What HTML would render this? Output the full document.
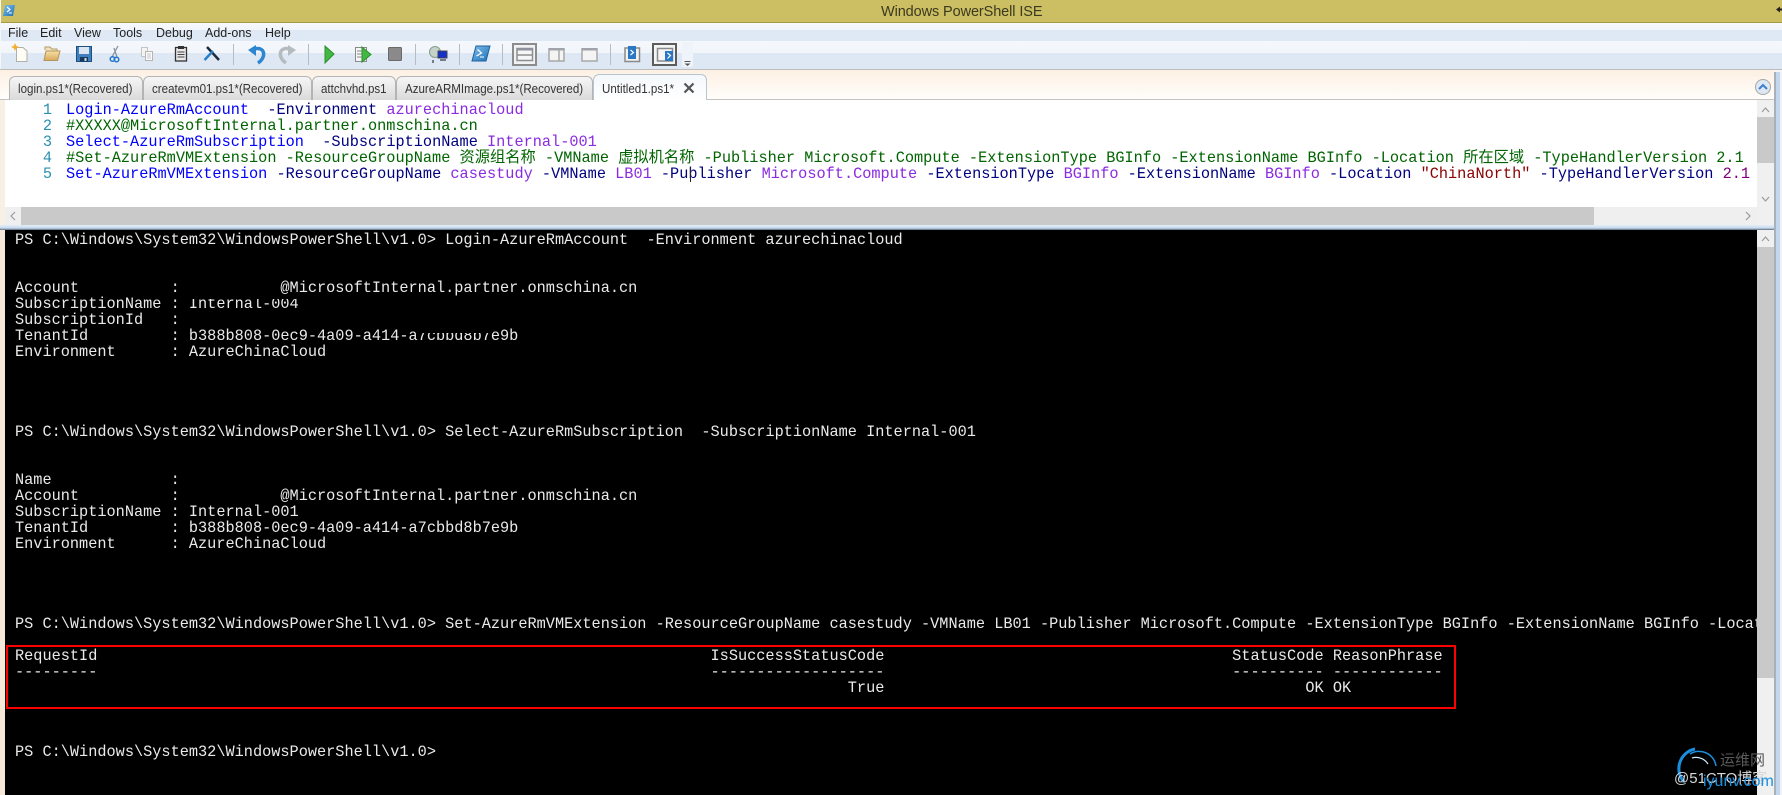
<!DOCTYPE html>
<html lang="en"><head><meta charset="utf-8"><title>Windows PowerShell ISE</title>
<style>
html,body{margin:0;padding:0;background:#f6f6f6}
body{position:relative;width:1782px;height:795px;overflow:hidden;font-family:"Liberation Sans","Noto Sans CJK SC",sans-serif}
.a{position:absolute}
.m{font:12.5px/16px "Liberation Sans",sans-serif;color:#222;top:25px;position:absolute}
.tab{position:absolute;box-sizing:border-box;top:76px;height:24px;border:1px solid #b4b4b4;border-bottom:0;border-radius:6px 6px 0 0;background:linear-gradient(#f6f6f6,#dadada);font:13px/24px "Liberation Sans",sans-serif;color:#333;white-space:nowrap;padding-left:8px;overflow:hidden}
.tab span{display:inline-block;transform:scaleX(.89);transform-origin:0 50%}
.tab.on{top:74px;height:27px;background:linear-gradient(#f4f8fc,#fff);border-color:#b8c4d0;line-height:28px}
.code{font-family:"Liberation Mono","Noto Sans CJK SC",monospace;font-size:15.25px;line-height:16px;white-space:pre}
.b{color:#0000ff}.n{color:#000080}.v{color:#8a2be2}.g{color:#006400}.r{color:#8b0000}.p{color:#800080}
</style></head><body>
<!-- title bar -->
<div class="a" style="left:1px;top:0;width:1781px;height:22px;background:#ccbe62"></div>
<div class="a" style="left:1px;top:22px;width:1781px;height:1px;background:#a89a40"></div>
<div class="a" style="left:881px;top:3px;font:14.5px/18px 'Liberation Sans',sans-serif;color:#3a3a20;letter-spacing:-.1px;white-space:nowrap">Windows PowerShell ISE</div>
<!-- menu + toolbar -->
<div class="a" style="left:1px;top:23px;width:1781px;height:46px;background:linear-gradient(#f6f9fd 0,#f2f6fb 7px,#dfe9f5 7px,#dfe9f5 18px,#f4f8fc 18px,#f2f6fb 30px,#dde8f4 30px,#dde8f4 46px)"></div>
<div class="a" style="left:0;top:69px;width:1782px;height:1px;background:#bcbcbc"></div>
<span class="m" style="left:8px">File</span><span class="m" style="left:40px">Edit</span><span class="m" style="left:74px">View</span><span class="m" style="left:113px">Tools</span><span class="m" style="left:156px">Debug</span><span class="m" style="left:205px">Add-ons</span><span class="m" style="left:265px">Help</span>
<!-- tab strip -->
<div class="a" style="left:0;top:70px;width:1774px;height:29px;background:linear-gradient(#fdf0e3,#fffdfa)"></div>
<div class="a" style="left:0;top:99px;width:1774px;height:1px;background:#c4c4c4"></div>
<div class="tab" style="left:9px;width:134px"><span>login.ps1*(Recovered)</span></div>
<div class="tab" style="left:143px;width:169px"><span>createvm01.ps1*(Recovered)</span></div>
<div class="tab" style="left:312px;width:84px"><span>attchvhd.ps1</span></div>
<div class="tab" style="left:396px;width:197px"><span>AzureARMImage.ps1*(Recovered)</span></div>
<div class="tab on" style="left:593px;width:114px"><span>Untitled1.ps1*</span></div>
<!-- editor -->
<div class="a" style="left:0;top:100px;width:5px;height:130px;background:#f8efe5"></div>
<div class="a" style="left:5px;top:100px;width:1752px;height:107px;background:#fff"></div>
<div class="a code" style="left:34px;top:102px;width:18px;text-align:right;color:#2b91af">1
2
3
4
5</div>
<div class="a code" style="left:66px;top:102px;width:1691px;overflow:hidden"><span class="b">Login-AzureRmAccount</span>  <span class="n">-Environment</span> <span class="v">azurechinacloud</span>
<span class="g">#XXXXX@MicrosoftInternal.partner.onmschina.cn</span>
<span class="b">Select-AzureRmSubscription</span>  <span class="n">-SubscriptionName</span> <span class="v">Internal-001</span>
<span class="g">#Set-AzureRmVMExtension -ResourceGroupName 资源组名称 -VMName 虚拟机名称 -Publisher Microsoft.Compute -ExtensionType BGInfo -ExtensionName BGInfo -Location 所在区域 -TypeHandlerVersion 2.1</span>
<span class="b">Set-AzureRmVMExtension</span> <span class="n">-ResourceGroupName</span> <span class="v">casestudy</span> <span class="n">-VMName</span> <span class="v">LB01</span> <span class="n">-Publisher</span> <span class="v">Microsoft.Compute</span> <span class="n">-ExtensionType</span> <span class="v">BGInfo</span> <span class="n">-ExtensionName</span> <span class="v">BGInfo</span> <span class="n">-Location</span> <span class="r">"ChinaNorth"</span> <span class="n">-TypeHandlerVersion</span> <span class="p">2.1</span></div>
<div class="a" style="left:690px;top:167px;width:1px;height:15px;background:#222"></div>
<!-- editor scrollbars -->
<div class="a" style="left:5px;top:207px;width:1769px;height:18px;background:#efefef"></div>
<div class="a" style="left:21px;top:207px;width:1573px;height:18px;background:#c9c9c9"></div>
<div class="a" style="left:1757px;top:100px;width:17px;height:125px;background:#f0f0f0"></div>
<div class="a" style="left:1757px;top:117px;width:17px;height:46px;background:#c9c9c9"></div>
<!-- splitter -->
<div class="a" style="left:0;top:225px;width:1774px;height:5px;background:linear-gradient(#e4edf7,#c8daee 60%,#5d6c80 100%)"></div>
<!-- right edge -->
<div class="a" style="left:1774px;top:72px;width:2px;height:723px;background:#a8b0ba"></div>
<div class="a" style="left:1776px;top:72px;width:4px;height:723px;background:#c4d6ec"></div>
<div class="a" style="left:1780px;top:72px;width:2px;height:723px;background:#eef2f6"></div>
<!-- console -->
<div class="a" style="left:0;top:230px;width:5px;height:565px;background:#f6e8d8"></div>
<div class="a" style="left:5px;top:230px;width:1752px;height:565px;background:#000"></div>
<div class="a" style="left:1757px;top:230px;width:17px;height:565px;background:#f0f0f0"></div>
<div class="a" style="left:1757px;top:247px;width:17px;height:431px;background:#c9c9c9"></div>
<div class="a code" style="left:15px;top:232px;width:1742px;height:563px;overflow:hidden;color:#eaeaea">PS C:\Windows\System32\WindowsPowerShell\v1.0&gt; Login-AzureRmAccount  -Environment azurechinacloud


Account          :           @MicrosoftInternal.partner.onmschina.cn
SubscriptionName : Internal-004
SubscriptionId   :
TenantId         : b388b808-0ec9-4a09-a414-a7cbbd8b7e9b
Environment      : AzureChinaCloud




PS C:\Windows\System32\WindowsPowerShell\v1.0&gt; Select-AzureRmSubscription  -SubscriptionName Internal-001


Name             :
Account          :           @MicrosoftInternal.partner.onmschina.cn
SubscriptionName : Internal-001
TenantId         : b388b808-0ec9-4a09-a414-a7cbbd8b7e9b
Environment      : AzureChinaCloud




PS C:\Windows\System32\WindowsPowerShell\v1.0&gt; Set-AzureRmVMExtension -ResourceGroupName casestudy -VMName LB01 -Publisher Microsoft.Compute -ExtensionType BGInfo -ExtensionName BGInfo -Location "ChinaNorth" -TypeHandlerVersion 2.1

RequestId                                                                   IsSuccessStatusCode                                      StatusCode ReasonPhrase
---------                                                                   -------------------                                      ---------- ------------
                                                                                           True                                              OK OK



PS C:\Windows\System32\WindowsPowerShell\v1.0&gt;</div>
<!-- redaction smudges -->
<div class="a" style="left:188px;top:295px;width:112px;height:4px;background:#000"></div>
<div class="a" style="left:418px;top:326px;width:75px;height:7px;background:#000"></div>
<!-- red rectangle -->
<div class="a" style="left:6px;top:645px;width:1450px;height:64px;box-sizing:border-box;border:2px solid #f00"></div>
<!-- icons -->
<svg class="a" style="left:0;top:0" width="1782" height="795" viewBox="0 0 1782 795">
<defs><linearGradient id="bl" x1="0" y1="0" x2="1" y2="1"><stop offset="0" stop-color="#7cc0ee"/><stop offset="1" stop-color="#1f6fb5"/></linearGradient>
<linearGradient id="fo" x1="0" y1="0" x2="0" y2="1"><stop offset="0" stop-color="#f6e0a8"/><stop offset="1" stop-color="#d9a95a"/></linearGradient></defs>
<!-- title icon -->
<path d="M5 5H15L13 16H3Z" fill="url(#bl)"/><path d="M7 7L10 9.5L7 12" fill="none" stroke="#fff" stroke-width="1.2"/><path d="M9 13H12" stroke="#fff"/>
<path d="M1776 9.5L1780 6.5V8.5H1782V10.5H1780V12.5Z" fill="#222"/>
<!-- new -->
<path d="M16.5 47.5H23L27 51V61.5H16.5Z" fill="#fdfdf6" stroke="#b0b0a8"/><path d="M15 43L16.2 45.8L19 47L16.2 48.2L15 51L13.8 48.2L11 47L13.8 45.8Z" fill="#f5b030"/>
<!-- open -->
<path d="M45 50V47H50L52 49H57V51" fill="#efe2bc" stroke="#b49c68"/><path d="M44 60.500L46 51H60L57.500 60.500Z" fill="url(#fo)" stroke="#b4945a"/>
<!-- save -->
<rect x="76.500" y="46.500" width="15" height="15" fill="#3f7fbd" stroke="#1f4f80"/><rect x="79" y="47" width="10" height="7" fill="#dbe6f2"/><rect x="80" y="57" width="8" height="4.500" fill="#16385c"/><rect x="84.500" y="58" width="2" height="3" fill="#cfe0f0"/>
<!-- cut -->
<path d="M112 57L118 46M117 57L114 48" stroke="#8a94a0" stroke-width="1.300" fill="none"/><circle cx="112.500" cy="59" r="2.300" fill="none" stroke="#2277cc" stroke-width="1.500"/><circle cx="116.500" cy="59.500" r="2.300" fill="none" stroke="#2277cc" stroke-width="1.500"/>
<!-- copy -->
<path d="M141.500 47.500H147.500V56.500H141.500Z" fill="#f4f4f4" stroke="#c4c4c4"/><path d="M145.500 51.500H152.500V60.500H145.500Z" fill="#fbfbfb" stroke="#b4b4b4"/><path d="M147 54H151M147 56H151M147 58H151" stroke="#c4c4c4"/>
<!-- paste -->
<rect x="175.500" y="47.500" width="11" height="13.500" fill="#e8e8e8" stroke="#333" stroke-width="1.300"/><rect x="178" y="46" width="6" height="3" fill="#333"/><path d="M177.500 52H184.500M177.500 54.500H184.500M177.500 57H184.500" stroke="#444"/>
<!-- clear -->
<path d="M207 47L219 60" stroke="#1c2a3a" stroke-width="2.500"/><path d="M204.500 60L213 51" stroke="#2a80c8" stroke-width="2.500"/>
<!-- separators -->
<g stroke="#b4bcc6"><path d="M233.500 44V65M308.500 44V65M415.500 44V65M459.500 44V65M502.500 44V65M610.500 44V65"/></g>
<!-- undo -->
<path d="M254 49C265 46 267 57 258 63" fill="none" stroke="#2f86d0" stroke-width="3.500"/><path d="M248 50L256 45V56Z" fill="#2f86d0"/>
<!-- redo -->
<path d="M290 49C279 46 277 57 286 63" fill="none" stroke="#b4bcc0" stroke-width="3.500"/><path d="M296 50L288 45V56Z" fill="#b4bcc0"/>
<!-- run -->
<path d="M325 46L334 54L325 63Z" fill="#42b842" stroke="#2c8f2c"/>
<!-- run selection -->
<rect x="355.500" y="47.500" width="11" height="14" fill="#f6f6f6" stroke="#8a8a8a"/><path d="M357 51H364M357 54H362M357 57H362" stroke="#888"/><path d="M362 47L371 54.500L362 62Z" fill="#42b842" stroke="#2c8f2c"/>
<!-- stop -->
<rect x="388.500" y="47.500" width="13" height="13" rx="1" fill="#8a8a8a" stroke="#6a6a6a"/>
<!-- remote -->
<circle cx="435" cy="52" r="5.500" fill="#c4d4c8" stroke="#8a9a90"/><rect x="438" y="51" width="9" height="7" fill="#1530c8" stroke="#445"/><path d="M440 60H446M433 60V63" stroke="#556" stroke-width="1.500"/>
<!-- PS -->
<path d="M476 46H490L486 61H472Z" fill="url(#bl)" stroke="#1f5f9f"/><path d="M477.500 49.500L481.500 53L476.500 56" fill="none" stroke="#fff" stroke-width="1.300"/><path d="M480 57H484" stroke="#fff"/>
<!-- layout 1 -->
<rect x="513" y="44" width="23" height="21" fill="#f0f2f4" stroke="#8c8c8c" stroke-width="2"/>
<rect x="517" y="48.500" width="15.500" height="12" fill="#f6f6f6" stroke="#8e8e8e" stroke-width="1.500"/><rect x="517" y="48" width="16" height="2.500" fill="#8e929a"/><path d="M517 55H532" stroke="#8e8e8e" stroke-width="1.500"/>
<!-- layout 2 -->
<rect x="549" y="49" width="15" height="12" fill="#f4f4f4" stroke="#a8a8a8" stroke-width="1.500"/><rect x="548.500" y="48" width="16" height="2.500" fill="#a0a4aa"/><path d="M559 50V61" stroke="#a8a8a8" stroke-width="1.500"/>
<!-- layout 3 -->
<rect x="582" y="49" width="15" height="12" fill="#f4f4f4" stroke="#a8a8a8" stroke-width="1.500"/><rect x="581.500" y="48" width="16" height="2.500" fill="#a0a4aa"/>
<!-- addon 1 -->
<rect x="625" y="48" width="14.500" height="13.500" fill="#f3f3f3" stroke="#8a8a8a" stroke-width="1.500"/><rect x="628" y="46" width="8" height="13" fill="#2a78c4"/><path d="M630.500 50L633.500 52.500L630.500 55" fill="none" stroke="#fff" stroke-width="1.200"/>
<!-- addon 2 -->
<rect x="653" y="44" width="23" height="21" fill="#f3f4f5" stroke="#5c5c5c" stroke-width="2"/>
<rect x="657.500" y="48.500" width="15" height="12.500" fill="#f6f6f6" stroke="#8a8a8a" stroke-width="1.500"/><rect x="665" y="51" width="8" height="10" fill="#2a78c4"/><path d="M667.500 53L670.500 55.500L667.500 58.500" fill="none" stroke="#fff" stroke-width="1.200"/>
<!-- overflow -->
<rect x="682" y="42" width="11" height="25" rx="2" fill="#eff4fa"/><path d="M684.500 61.500H690.500" stroke="#555"/><path d="M684.500 63.500H690.500L687.500 66Z" fill="#555"/>
<!-- tab close -->
<path d="M684.500 83.500L693.500 92.500M693.500 83.500L684.500 92.500" stroke="#555" stroke-width="2.200"/>
<!-- tab list button -->
<circle cx="1763" cy="87" r="7.500" fill="#dfe8f2" stroke="#a6a6a6"/><path d="M1759 89L1763 85L1767 89" fill="none" stroke="#3a7fd0" stroke-width="2"/>
<!-- scroll arrows -->
<g fill="none" stroke="#9a9a9a" stroke-width="1.200"><path d="M1762 112L1765.500 108L1769 112M1762 197L1765.500 201L1769 197M1746 212L1750 216L1746 220M1762 241L1765.500 237L1769 241M15 212L11 216L15 220"/></g>
<!-- watermark -->
<path d="M1684 782A20 20 0 0 1 1695 749" fill="none" stroke="#1a8fe0" stroke-width="3"/>
<path d="M1690 754A17 17 0 0 1 1716 766" fill="none" stroke="#1a8fe0" stroke-width="1.500"/>
<path d="M1692 758A14 14 0 0 1 1708 764" fill="none" stroke="#cfe8fa" stroke-width="1.200"/>
<text x="1720" y="765" font-family="'Noto Sans CJK SC',sans-serif" font-size="15" fill="#5a5a5a">运维网</text>
<text x="1674" y="783" font-family="'Liberation Sans','Noto Sans CJK SC',sans-serif" font-size="15" fill="#d8d8d8">@51CTO博客</text>
<text x="1703" y="786" font-family="'Liberation Sans',sans-serif" font-size="16" fill="#1a8fe0">iyunv.com</text>
</svg>
</body></html>
